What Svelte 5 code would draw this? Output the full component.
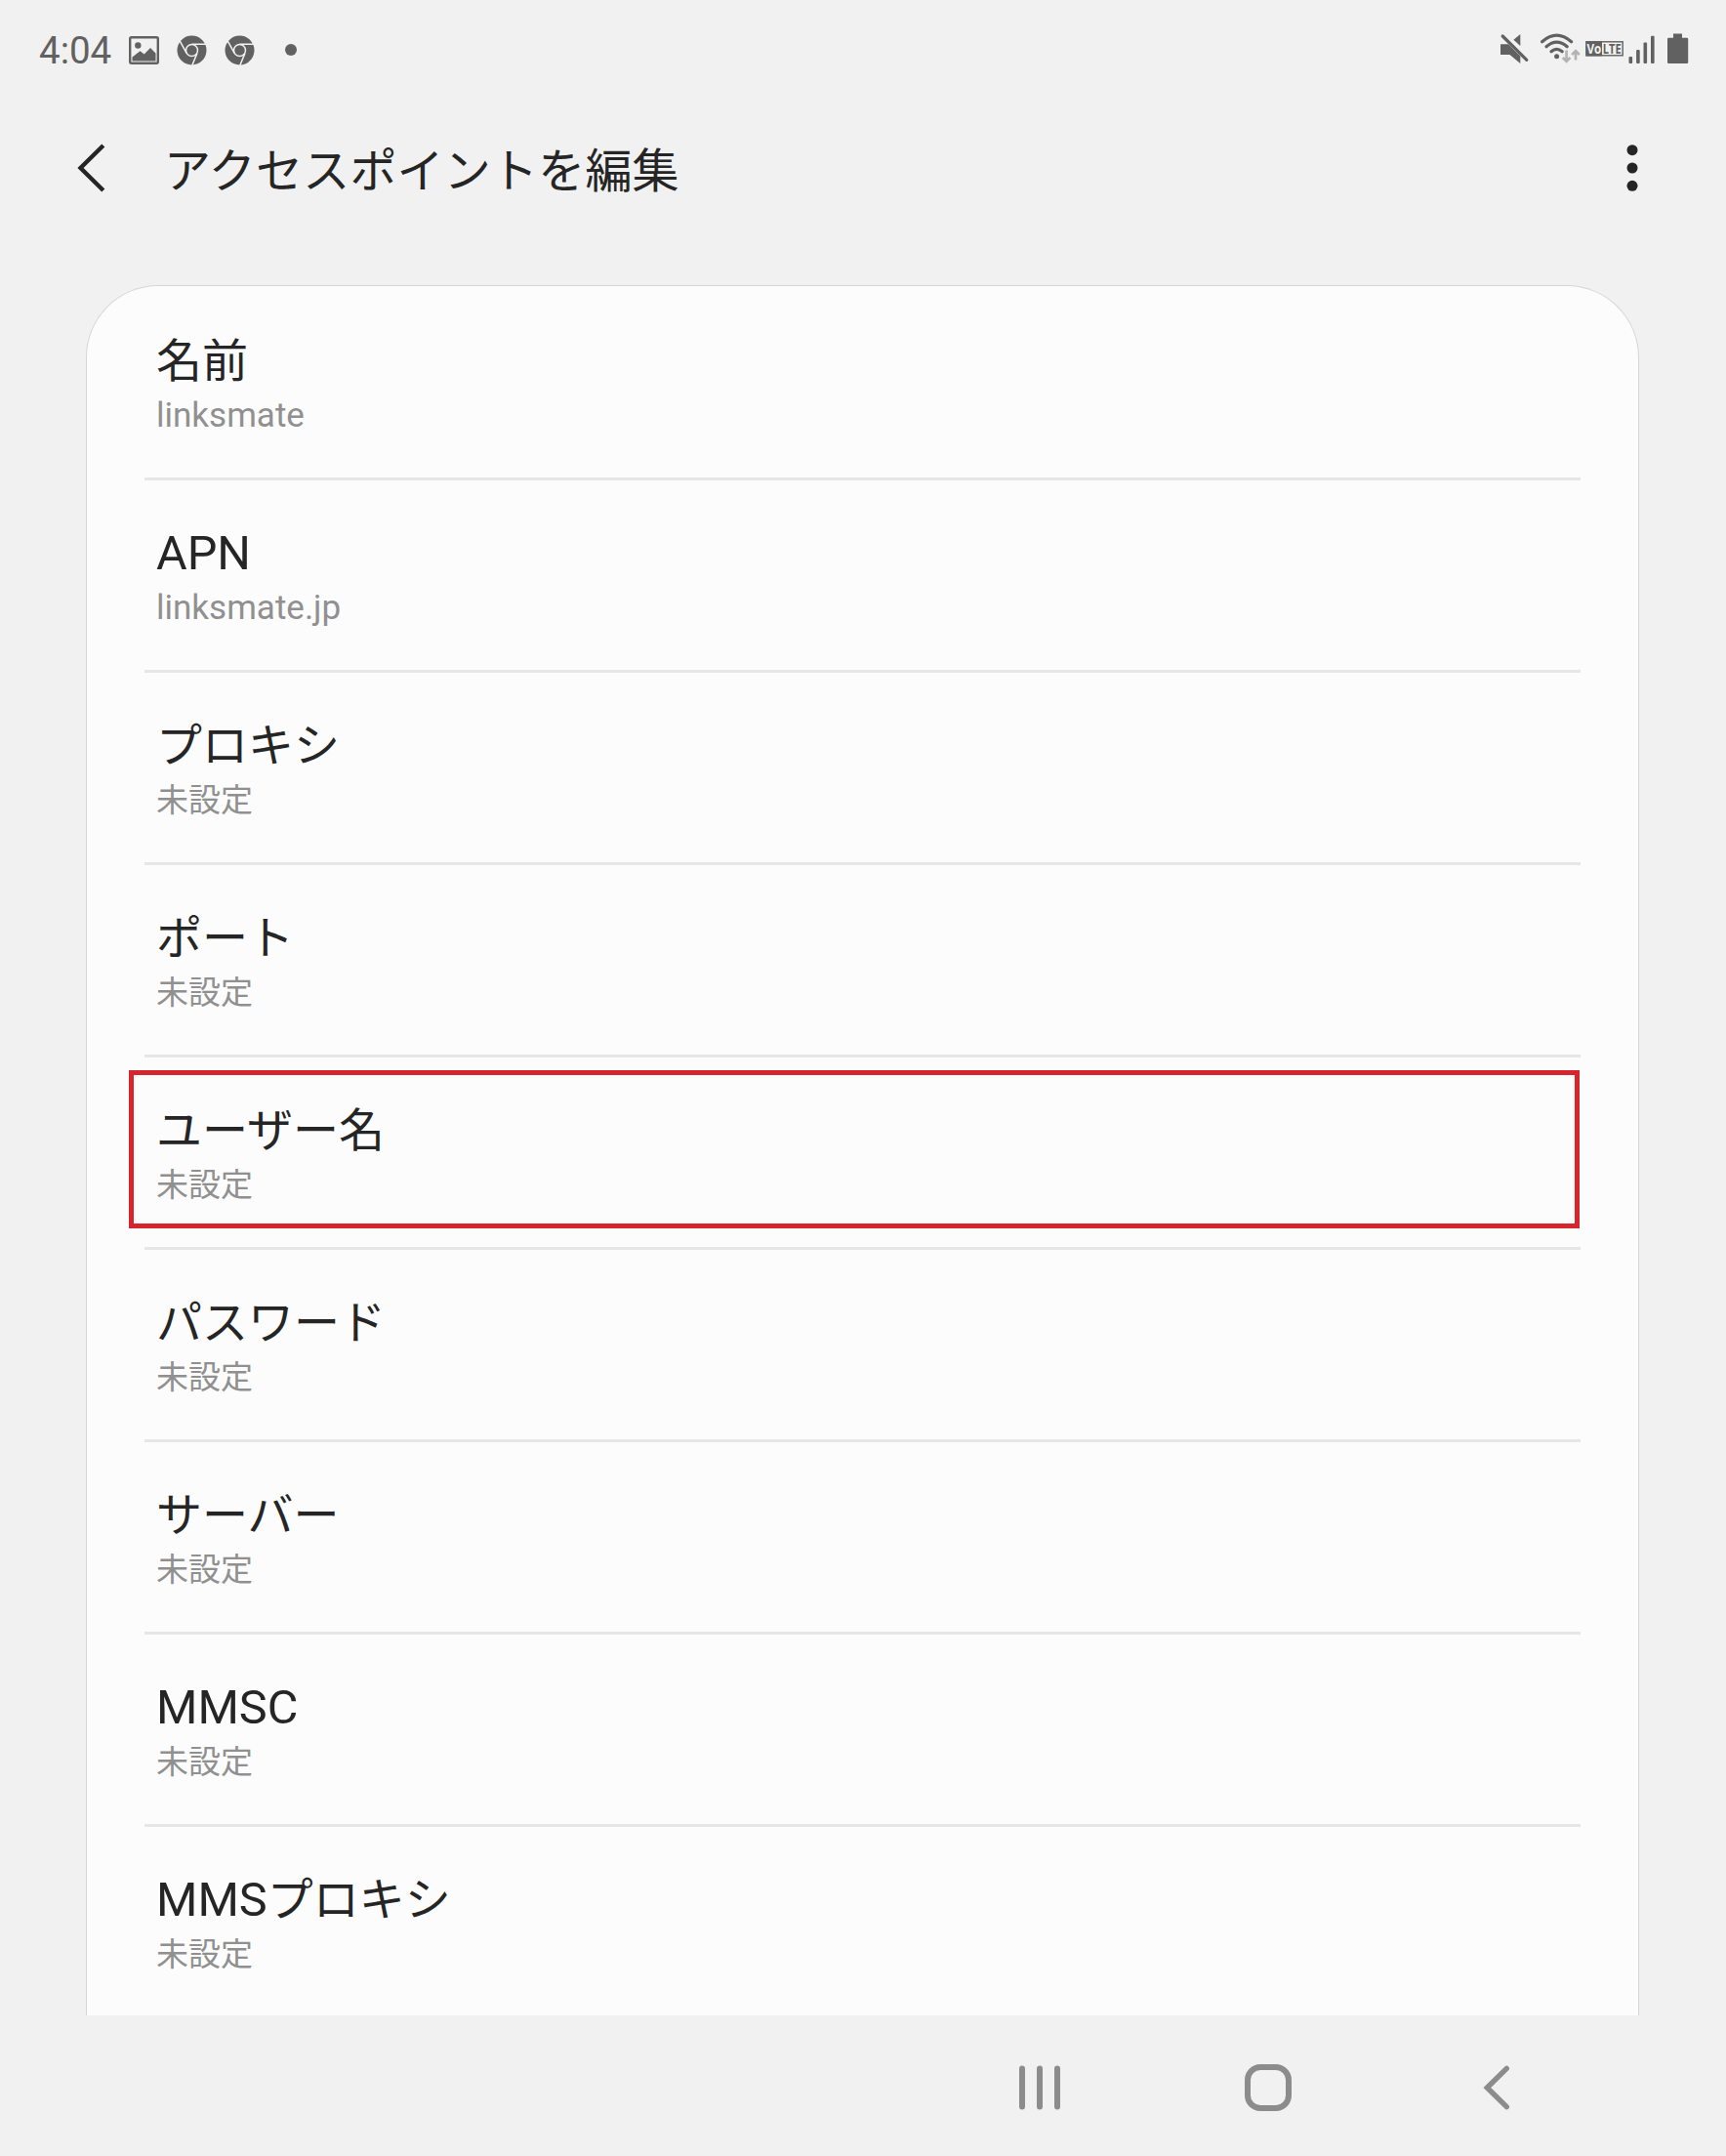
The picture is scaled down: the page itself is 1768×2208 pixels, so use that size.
<script>
  // --- Data ---
  const title = 'アクセスポイントを編集';

  const settings = [
    { id: 'name', label: '名前', value: 'linksmate' },
    { id: 'apn', label: 'APN', value: 'linksmate.jp' },
    { id: 'proxy', label: 'プロキシ', value: '未設定' },
    { id: 'port', label: 'ポート', value: '未設定' },
    { id: 'user', label: 'ユーザー名', value: '未設定' },
    { id: 'password', label: 'パスワード', value: '未設定' },
    { id: 'server', label: 'サーバー', value: '未設定' },
    { id: 'mmsc', label: 'MMSC', value: '未設定' },
    { id: 'mms-proxy', label: 'MMSプロキシ', value: '未設定' },
  ];

  let selectedId = $state('user');

  // Split into latin and japanese runs, they are sized a little differently
  function runs(text) {
    return text
      .split(/([\x20-\x7e]+)/)
      .filter(Boolean)
      .map((part) => ({ part, ja: !/^[\x20-\x7e]/.test(part) }));
  }
</script>

{#snippet mixed(text)}
  {#each runs(text) as run}<span class:ja={run.ja}>{run.part}</span>{/each}
{/snippet}

{#snippet chrome()}
  <svg class="chrome" width="31" height="31" viewBox="0 0 31 31">
    <circle cx="15.5" cy="15.5" r="15" fill="#616161" />
    <g fill="none" stroke="#f1f1f1" stroke-width="1.5">
      <circle cx="15.5" cy="15.5" r="6" />
      <path d="M15.5 9.3H30M10.2 18.6L3.2 5.8M20.9 18.6L15.8 31" />
    </g>
  </svg>
{/snippet}

<div class="screen">
  <div class="status">
    <span class="time">4:04</span>
    <svg class="picture" width="31" height="29" viewBox="0 0 31 29">
      <rect x="1.2" y="1.2" width="28.6" height="26.6" rx="1.5" fill="none" stroke="#616161" stroke-width="2.4" />
      <circle cx="9.3" cy="9.5" r="3.2" fill="#616161" />
      <path d="M3.5 21.5L11.5 15.2L15.7 18.6L22 12L27.5 17.5V25.5H3.5Z" fill="#616161" />
    </svg>
    {@render chrome()}
    {@render chrome()}
    <span class="dot"></span>

    <svg class="system" width="196" height="34" viewBox="1535 33 196 34">
      <g fill="#616161">
        <!-- muted speaker -->
        <path d="M1537 45.2H1545L1557.3 57.5V65L1546.5 56H1537Z" />
        <path d="M1557.3 35V47L1550.4 40.8Z" />
        <path d="M1539.2 37L1563.8 61.4" stroke="#616161" stroke-width="3.2" stroke-linecap="round" />
        <!-- wifi -->
        <g fill="none" stroke="#616161" stroke-width="3.2" stroke-linecap="round">
          <path d="M1579.6 42.7Q1594.5 29.7 1609.6 42.7" />
          <path d="M1584 47.8Q1594.5 38.5 1605.2 47.8" />
          <path d="M1589 52.7Q1594.5 48 1600.2 52.7" />
        </g>
        <circle cx="1594.6" cy="57.7" r="2.5" />
        <g fill="none" stroke="#b3b3b3" stroke-width="2.6">
          <path d="M1604.6 51.5V62.5M1600.8 59L1604.6 62.9L1608.4 59" />
          <path d="M1614 61.5V52.5M1610.2 56L1614 52.2L1617.8 56" />
        </g>
        <!-- VoLTE badge -->
        <rect x="1625" y="42.8" width="37.2" height="14" fill="none" stroke="#616161" stroke-width="1.4" />
        <rect x="1624.4" y="42.2" width="16.6" height="15.2" />
        <text x="1625.4" y="54.6" class="badge light" textLength="14.8" lengthAdjust="spacingAndGlyphs">Vo</text>
        <text x="1641.8" y="54.6" class="badge" textLength="18.8" lengthAdjust="spacingAndGlyphs">LTE</text>
        <!-- signal bars -->
        <rect x="1668.5" y="58" width="3.6" height="7" rx="1" />
        <rect x="1676.1" y="51" width="3.6" height="14" rx="1" />
        <rect x="1683.5" y="43.5" width="3.6" height="21.5" rx="1" />
        <rect x="1691" y="36.7" width="3.6" height="28.3" rx="1" />
        <!-- battery -->
        <path d="M1714 34.6H1723V38.8H1728Q1729.2 38.8 1729.2 40V63.8Q1729.2 65 1728 65H1709.2Q1708 65 1708 63.8V40Q1708 38.8 1709.2 38.8H1714Z" />
      </g>
    </svg>
  </div>

  <header>
    <svg class="back" width="30" height="50" viewBox="0 0 30 50">
      <path d="M26.8 2L3.5 25L26.8 48" fill="none" stroke="#252525" stroke-width="4.4" />
    </svg>
    <h1>{title}</h1>
    <svg class="more" width="12" height="50" viewBox="0 0 12 50">
      <g fill="#252525">
        <circle cx="6" cy="6.7" r="5.5" />
        <circle cx="6" cy="25" r="5.5" />
        <circle cx="6" cy="43.3" r="5.5" />
      </g>
    </svg>
  </header>

  <main>
    <ul>
      {#each settings as item (item.id)}
        <li class:selected={item.id === selectedId}>
          <div class="label">{@render mixed(item.label)}</div>
          <div class="value">{@render mixed(item.value)}</div>
        </li>
      {/each}
    </ul>
  </main>

  <nav>
    <svg width="48" height="50" viewBox="0 0 48 50">
      <path d="M6 5.5V44.5M24 5.5V44.5M42 5.5V44.5" stroke="#8c8c8c" stroke-width="6" stroke-linecap="round" />
    </svg>
    <svg width="50" height="50" viewBox="0 0 50 50">
      <rect x="4" y="4" width="42" height="42" rx="13" fill="none" stroke="#8c8c8c" stroke-width="6" />
    </svg>
    <svg width="30" height="50" viewBox="0 0 30 50">
      <path d="M25.3 5.3L5.3 25L25.3 44.7" fill="none" stroke="#8c8c8c" stroke-width="5.4" stroke-linecap="round" />
    </svg>
  </nav>
</div>

<style>
  :global(body) {
    background: #f1f1f1;
  }

  .screen {
    display: flex;
    flex-direction: column;
    width: 1768px;
    height: 2208px;
    background: #f1f1f1;
    color: #252525;
    font-family: Roboto, "Noto Sans CJK JP", sans-serif;
    overflow: hidden;
  }

  svg {
    display: block;
    flex: none;
  }

  .status {
    display: flex;
    align-items: center;
    height: 102px;
    padding: 0 37px 0 40px;
    color: #616161;
  }

  .time {
    width: 92px;
    font-size: 38.5px;
    line-height: 46px;
    margin-top: 2px;
  }

  .chrome {
    margin-left: 18px;
  }

  .dot {
    width: 12px;
    height: 12px;
    margin-left: 31px;
    border-radius: 50%;
    background: #616161;
  }

  .system {
    margin: -2px 0 0 auto;
  }

  .badge {
    font: 700 14px "Open Sans", sans-serif;
  }

  .light {
    fill: #f1f1f1;
  }

  header {
    display: flex;
    align-items: center;
    height: 140px;
    padding: 0 90px 0 79px;
  }

  h1 {
    margin: 8px 0 0 59px;
    font-size: 48px;
    font-weight: 400;
    line-height: 60px;
    letter-spacing: 0.2px;
  }

  .more {
    margin-left: auto;
  }

  main {
    height: 1772px;
    margin: 50px 89px 0 88px;
    box-sizing: border-box;
    padding: 2px 59px 0;
    border: 1px solid #d6d6d6;
    border-bottom: none;
    border-radius: 74px 74px 0 0;
    background: #fcfcfc;
  }

  ul {
    margin: 0;
    padding: 0;
    list-style: none;
  }

  li {
    position: relative;
    box-sizing: border-box;
    height: 197px;
    padding: 47px 12px 0;
    border-bottom: 3px solid #e6e6e6;
  }

  li:last-child {
    border-bottom: none;
  }

  /* Red frame round the highlighted row */
  .selected::after {
    content: '';
    position: absolute;
    top: 13px;
    left: -16px;
    right: 1px;
    height: 152px;
    border: 5px solid #d7252d;
  }

  .label {
    font-size: 48.6px;
    line-height: 56px;
  }

  .label .ja {
    font-size: 47px;
  }

  .value {
    margin-top: 7px;
    color: #909090;
    font-size: 35px;
    line-height: 42px;
  }

  .value .ja {
    font-size: 33px;
  }

  nav {
    display: grid;
    grid-template-columns: repeat(3, 234px);
    justify-items: center;
    align-items: center;
    box-sizing: border-box;
    height: 144px;
    padding: 4px 0 0 948px;
  }
</style>
